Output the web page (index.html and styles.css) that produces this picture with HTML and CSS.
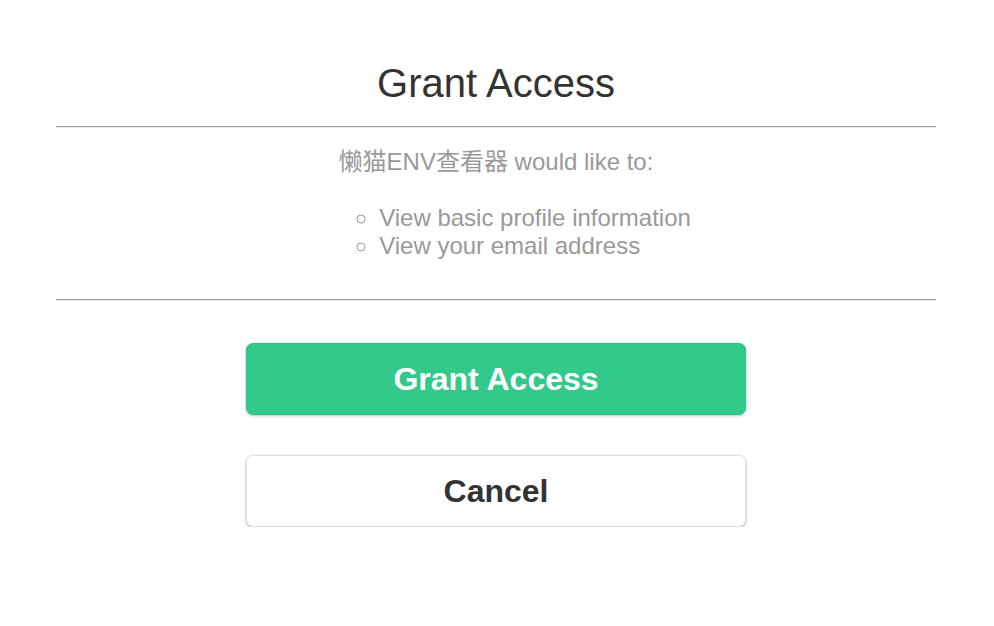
FILE: index.html
```html
<!DOCTYPE html>
<html lang="en">
<head>
<meta charset="utf-8">
<title>Grant Access</title>
<link rel="stylesheet" href="styles.css">
</head>
<body>
<main class="page">
  <h1 class="title">Grant Access</h1>
  <hr class="rule">
  <p class="intro">懒猫ENV查看器 would like to:</p>
  <ul class="scopes">
    <li>View basic profile information</li>
    <li>View your email address</li>
  </ul>
  <hr class="rule">
  <div class="actions">
    <button class="btn btn-primary" type="button">Grant Access</button>
    <button class="btn btn-secondary" type="button">Cancel</button>
  </div>
</main>
</body>
</html>
```
FILE: styles.css
```css
html, body {
  margin: 0;
  padding: 0;
  background: #fff;
}
body {
  padding-right: 2px;
  font-family: "Liberation Sans", Arial, "Noto Sans CJK SC", sans-serif;
  color: #333;
}
.page {
  width: 880px;
  margin: 0 auto;
  display: flex;
  flex-direction: column;
}
.title {
  margin: 61px 0 21px;
  font-size: 40px;
  line-height: 44px;
  font-weight: normal;
  text-align: center;
  color: #333;
}
.rule {
  margin: 0;
  height: 0;
  border: 0;
  border-top: 1px solid #999;
  border-bottom: 1px solid #ebebeb;
}
.intro {
  margin: 20px 0 0;
  font-size: 24px;
  line-height: 28px;
  text-align: center;
  color: #999;
}
.scopes {
  width: fit-content;
  margin: 27px auto 40px;
  padding: 0 0 0 78px;
  list-style-type: circle;
  font-size: 24px;
  line-height: 28px;
  color: #999;
}
.scopes li {
  height: 28px;
}
.scopes li::marker {
  font-size: 25px;
}
.actions {
  display: flex;
  flex-direction: column;
  align-items: center;
  gap: 40px;
  margin-top: 42px;
}
.btn {
  width: 500px;
  height: 72px;
  border-radius: 7px;
  font-family: "Liberation Sans", Arial, sans-serif;
  font-weight: bold;
  font-size: 32px;
  cursor: pointer;
}
.btn-primary {
  background: #33c98b;
  color: #fff;
  border: 1px solid #2fc085;
  box-shadow: 0 1px 3px rgba(0, 0, 0, 0.25);
}
.btn-secondary {
  background: #fff;
  color: #333;
  border: 1px solid #e0e0e0;
  box-shadow: 0 1px 3px rgba(0, 0, 0, 0.3);
}
```
